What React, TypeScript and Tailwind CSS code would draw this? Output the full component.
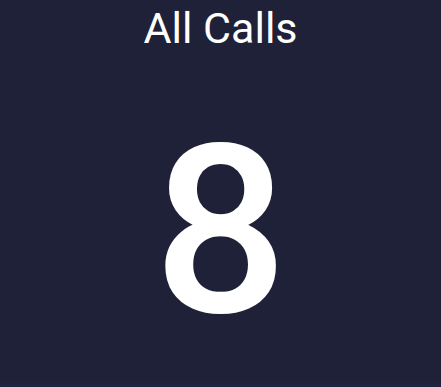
export default function App() {
  return (
    <div className="min-h-[387px] w-full bg-[#1e2440]">
      <div
        className="flex h-[383px] w-full flex-col items-center bg-[#1f2138] text-white"
        style={{ fontFamily: 'Roboto, "Noto Sans", sans-serif' }}
      >
        <h1 className="pt-[7px] text-[43px] leading-none font-normal">All Calls</h1>
        <div className="mt-[64px] text-[236px] leading-none font-medium">8</div>
      </div>
    </div>
  );
}
